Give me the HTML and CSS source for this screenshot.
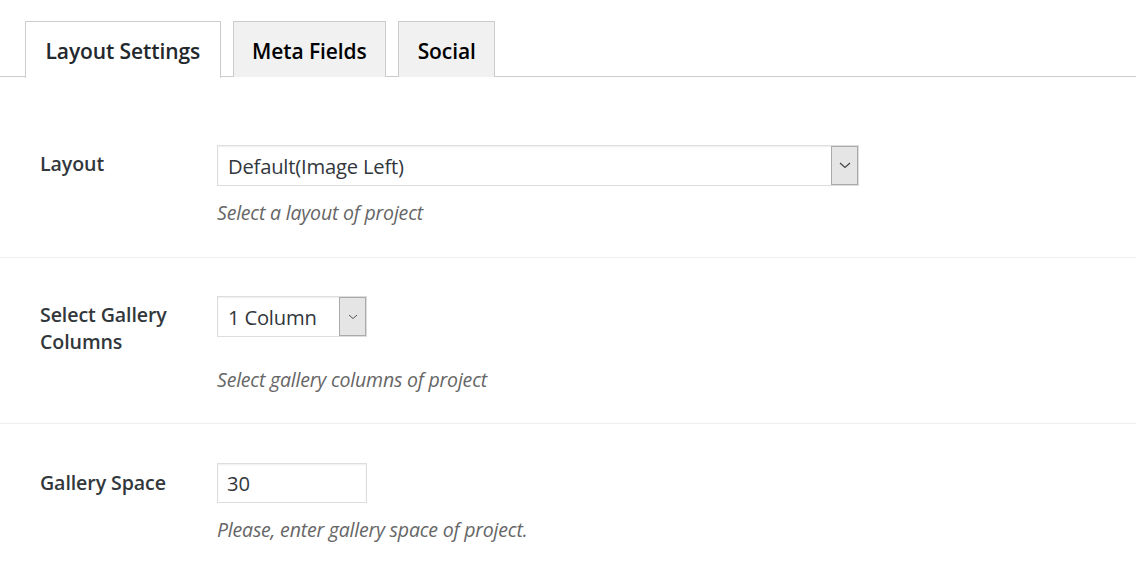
FILE: index.html
```html
<!DOCTYPE html>
<html>
<head>
<meta charset="utf-8">
<link rel="stylesheet" href="styles.css">
</head>
<body>
<div class="tabs">
  <div class="tab active">Layout Settings</div>
  <div class="tab">Meta Fields</div>
  <div class="tab">Social</div>
</div>
<div class="panel">
  <div class="row row-first">
    <div class="label">Layout</div>
    <div class="field">
      <div class="select wide">
        <span class="value">Default(Image Left)</span>
        <span class="arrow"><svg width="12" height="7" viewBox="0 0 12 7"><path d="M1 1 L6 5.5 L11 1" fill="none" stroke="#444" stroke-width="1.2"/></svg></span>
      </div>
      <div class="desc">Select a layout of project</div>
    </div>
  </div>
  <div class="row">
    <div class="label">Select Gallery Columns</div>
    <div class="field">
      <div class="select narrow">
        <span class="value">1 Column</span>
        <span class="arrow"><svg width="10" height="6" viewBox="0 0 10 6"><path d="M1 1 L5 4.5 L9 1" fill="none" stroke="#555" stroke-width="1"/></svg></span>
      </div>
      <div class="desc desc-tall">Select gallery columns of project</div>
    </div>
  </div>
  <div class="row row-last">
    <div class="label">Gallery Space</div>
    <div class="field">
      <div class="input">30</div>
      <div class="desc">Please, enter gallery space of project.</div>
    </div>
  </div>
</div>
</body>
</html>
```
FILE: styles.css
```css
html, body {
  margin: 0;
  padding: 0;
  background: #fff;
  font-family: "Open Sans", "Noto Sans", sans-serif;
  color: #23282d;
}
.tabs {
  display: flex;
  gap: 12px;
  padding: 21px 0 0 25px;
  border-bottom: 1px solid #ccc;
  height: 55px;
}
.tab {
  box-sizing: border-box;
  height: 56px;
  border: 1px solid #ccc;
  border-bottom: none;
  background: #f1f1f1;
  font-size: 21px;
  font-weight: 600;
  letter-spacing: -0.1px;
  color: #000;
  padding: 0 18.5px;
  line-height: 58px;
  margin-bottom: -1px;
}
.tab.active {
  background: #fff;
  color: #23282d;
  height: 57px;
  padding: 0 19.5px;
}
.panel {
  padding-top: 29px;
}
.row {
  display: flex;
  padding: 38px 0 32px 40px;
  border-bottom: 1px solid #eee;
}
.row-first {
  padding-top: 39px;
  padding-bottom: 33px;
}
.row-last {
  border-bottom: none;
}
.label {
  width: 150px;
  margin-right: 27px;
  flex: none;
  font-size: 19.6px;
  font-weight: 600;
  color: #32373c;
  line-height: 27px;
  padding-top: 5px;
  letter-spacing: -0.1px;
}
.row-last .label {
  padding-top: 7px;
}
.field {
  display: flex;
  flex-direction: column;
}
.select, .input {
  box-sizing: border-box;
  height: 41px;
  border: 1px solid #ddd;
  box-shadow: inset 0 1px 2px rgba(0,0,0,0.07);
  display: flex;
  align-items: center;
  font-size: 20.2px;
  color: #32373c;
  background: #fff;
}
.select.wide { width: 642px; }
.select.narrow { width: 150px; }
.input {
  width: 150px;
  height: 40px;
  margin-top: 1px;
  padding-left: 9px;
}
.value {
  flex: 1;
  padding-left: 10px;
  letter-spacing: -0.2px;
  white-space: nowrap;
}
.arrow {
  box-sizing: border-box;
  flex: none;
  width: 27px;
  height: 39px;
  background: #e5e5e5;
  border: 1px solid #aaa;
  display: flex;
  align-items: center;
  justify-content: center;
}
.desc {
  font-size: 19.5px;
  font-style: italic;
  color: #666;
  margin-top: 16px;
  line-height: 22px;
  letter-spacing: -0.2px;
}
.desc-tall {
  margin-top: 32px;
}
```
